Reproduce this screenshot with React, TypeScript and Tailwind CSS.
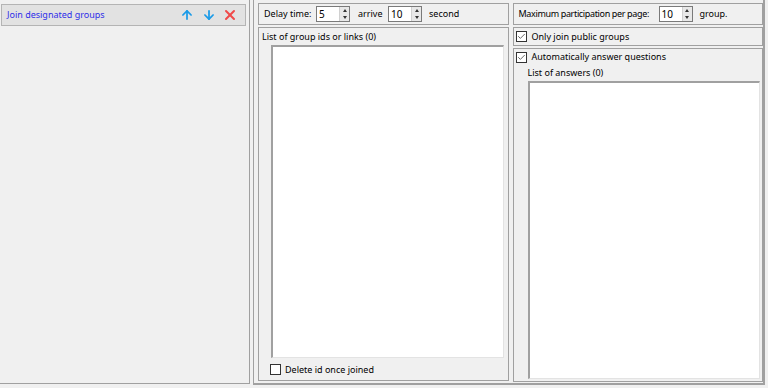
import { ArrowUp, ArrowDown, X, Check } from "lucide-react";

const Spin = ({ value }: { value: string }) => (
  <div className="flex h-[16px] w-[34px] shrink-0 items-stretch border border-[#7a7a7a] bg-white">
    <span className="flex-1 pl-[2px] text-[10px] leading-[14px]">{value}</span>
    <div className="flex w-[10px] flex-col border-l border-[#d0d0d0] bg-[#e8e8e8]">
      <div className="flex flex-1 items-center justify-center">
        <div className="h-0 w-0 border-x-[2.5px] border-b-[3px] border-x-transparent border-b-[#333]" />
      </div>
      <div className="flex flex-1 items-center justify-center">
        <div className="h-0 w-0 border-x-[2.5px] border-t-[3px] border-x-transparent border-t-[#333]" />
      </div>
    </div>
  </div>
);

const Box = ({ checked }: { checked?: boolean }) => (
  <div className="flex h-[11px] w-[11px] shrink-0 items-center justify-center border border-[#333] bg-white">
    {checked && <Check className="h-[9px] w-[9px] text-[#333]" strokeWidth={2} />}
  </div>
);

export default function App() {
  return (
    <div
      className="flex h-[388px] w-[768px] whitespace-nowrap bg-[#f0f0f0] text-[9px] text-black"
      style={{ fontFamily: '"Noto Sans", "Segoe UI", sans-serif' }}
    >
      {/* left side */}
      <div className="h-[384px] w-[250px] border-b border-r border-[#a0a0a0] pt-[4px]">
        <div className="ml-[1px] flex h-[22px] w-[245px] items-center border border-[#b4b4b4] bg-[#e2e2e2] pl-[5px] pr-[7px]">
          <span className="flex-1 text-[#2f2fe8]">Join designated groups</span>
          <ArrowUp className="h-[14px] w-[14px] text-[#1a9be8]" strokeWidth={3} />
          <ArrowDown className="ml-[8px] h-[14px] w-[14px] text-[#1a9be8]" strokeWidth={3} />
          <X className="ml-[6px] h-[16px] w-[16px] text-[#f04a4a]" strokeWidth={3} />
        </div>
      </div>

      {/* right container */}
      <div className="ml-[3px] flex h-[385px] w-[512px] gap-[4px] border-b-2 border-l border-r-2 border-[#a0a0a0] pl-[4px] pt-[3px]">
        {/* column 2 */}
        <div className="flex w-[251px] flex-col gap-[2px]">
          <div className="flex h-[22px] items-center border border-[#a0a0a0] pl-[5px]">
            <span className="w-[52px]">Delay time:</span>
            <Spin value="5" />
            <span className="ml-[8px] w-[30px]">arrive</span>
            <Spin value="10" />
            <span className="ml-[7px]">second</span>
          </div>
          <div className="flex h-[354px] flex-col border border-[#a0a0a0] pl-[3px] pr-[4px]">
            <div className="h-[17px] leading-[17px]">List of group ids or links (0)</div>
            <div className="ml-[9px] h-[313px] border-l-2 border-t-2 border-[#a0a0a0] border-b border-r border-b-[#e3e3e3] border-r-[#e3e3e3] bg-white" />
            <div className="ml-[8px] mt-[5px] flex items-center gap-[4px]">
              <Box />
              <span>Delete id once joined</span>
            </div>
          </div>
        </div>

        {/* column 3 */}
        <div className="flex w-[251px] flex-col gap-[2px]">
          <div className="flex h-[22px] items-center border border-[#a0a0a0] pl-[5px]">
            <span className="w-[140px] tracking-[-0.35px]">Maximum participation per page:</span>
            <Spin value="10" />
            <span className="ml-[7px]">group.</span>
          </div>
          <div className="flex h-[19px] items-center gap-[5px] border border-[#a0a0a0] pl-[2px]">
            <Box checked />
            <span>Only join public groups</span>
          </div>
          <div className="flex h-[334px] flex-col border border-[#a0a0a0] pl-[2px] pr-[2px]">
            <div className="flex h-[16px] items-center gap-[5px]">
              <Box checked />
              <span>Automatically answer questions</span>
            </div>
            <div className="ml-[12px] h-[16px] leading-[16px]">List of answers (0)</div>
            <div className="ml-[12px] h-[298px] border-l-2 border-t-2 border-[#a0a0a0] border-b border-r border-b-[#e3e3e3] border-r-[#e3e3e3] bg-white" />
          </div>
        </div>
      </div>
    </div>
  );
}
